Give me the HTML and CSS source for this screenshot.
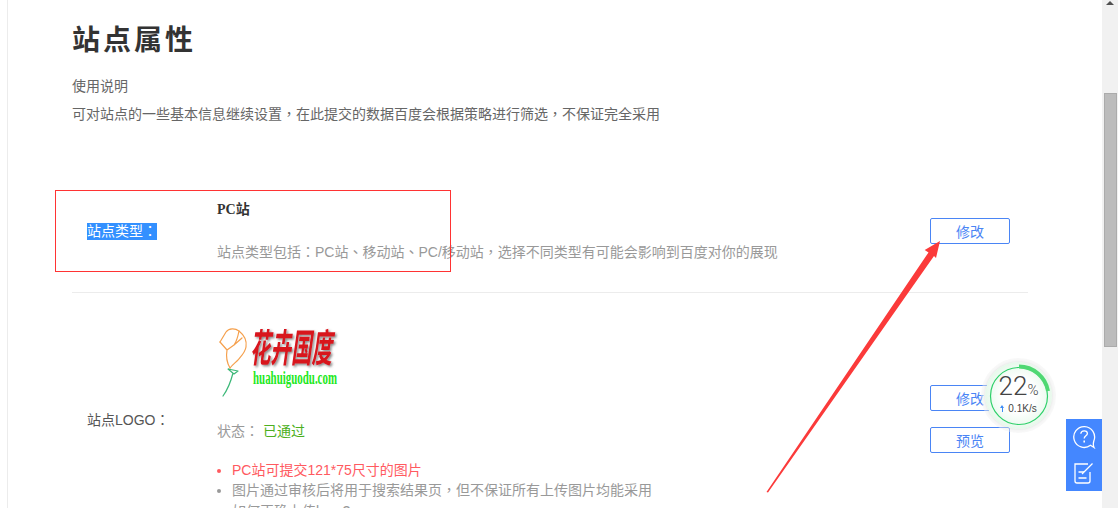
FILE: index.html
```html
<!DOCTYPE html>
<html lang="zh-CN">
<head>
  <meta charset="UTF-8"/>
  <title>站点属性</title>
  <link rel="stylesheet" href="styles.css">
</head>
<body>
  <div class="page">
    <main class="content">
      <h1>站点属性</h1>
      <p class="intro-head">使用说明</p>
      <p class="intro">可对站点的一些基本信息继续设置<span class="p" lang="zh-TW">，</span>在此提交的数据百度会根据策略进行筛选<span class="p" lang="zh-TW">，</span>不保证完全采用</p>

      <section class="row row-type">
        <div class="label"><span class="selected">站点类型<span class="p" lang="zh-TW">：</span></span></div>
        <div class="value">
          <strong class="site-type">PC站</strong>
          <p class="hint">站点类型包括<span class="p" lang="zh-TW">：</span>PC站<span class="p" lang="zh-TW">、</span>移动站<span class="p" lang="zh-TW">、</span>PC/移动站<span class="p" lang="zh-TW">，</span>选择不同类型有可能会影响到百度对你的展现</p>
        </div>
        <div class="actions"><button class="btn">修改</button></div>
      </section>

      <section class="row row-logo">
        <div class="label">站点LOGO<span class="p" lang="zh-TW">：</span></div>
        <div class="value">
          <svg class="logo" width="140" height="76" viewBox="0 0 140 76">
            <defs>
              <filter id="logo-shadow" x="-10%" y="-10%" width="130%" height="130%">
                <feDropShadow dx="1.5" dy="1.5" stdDeviation="1" flood-color="#555" flood-opacity=".7"/>
              </filter>
            </defs>
            <g fill="none" stroke-linecap="round" stroke-linejoin="round" stroke-width="1.2">
              <path d="M3 19 L9 9 C12 5 18 5 22 8 C27 12 30 18 29 24 C28 30 24 33 21 37 C18 40 15 42 13 45" stroke="#f5a04d"/>
              <path d="M3 19 L10 27 C9 33 10 40 13 45 M10 27 L17 22 C20 18 21 13 22 8 M17 22 L25 15" stroke="#f5a04d"/>
              <path d="M11 46 L17 51 L21 48 Z M16 50 C14 58 11 66 6 73" stroke="#3cb878"/>
            </g>
            <g filter="url(#logo-shadow)">
              <text class="logo-cn" transform="translate(33 39) skewX(-8) scale(1 1.9)">花卉国度</text>
            </g>
            <text class="logo-en" transform="translate(36 61) scale(1 1.4)" textLength="84" lengthAdjust="spacingAndGlyphs">huahuiguodu.com</text>
          </svg>
          <p class="status">状态<span class="p" lang="zh-TW">：</span> <span class="passed">已通过</span></p>
          <ul class="rules">
            <li class="warn">PC站可提交121*75尺寸的图片</li>
            <li>图片通过审核后将用于搜索结果页<span class="p" lang="zh-TW">，</span>但不保证所有上传图片均能采用</li>
            <li class="plain">如何正确上传logo?</li>
          </ul>
        </div>
        <div class="actions">
          <button class="btn">修改</button>
          <button class="btn">预览</button>
        </div>
      </section>
    </main>

    <div class="scrollbar">
      <span class="scroll-up"></span>
      <span class="scroll-thumb"></span>
    </div>
  </div>

  <!-- annotation drawn over the screenshot -->
  <div class="mark-box"></div>
  <svg class="mark-arrow" width="1118" height="508" viewBox="0 0 1118 508">
    <polygon points="766.5,492 928.5,252.4 924.7,250 940,241 936,258 934,256 768,492.5" fill="#fb3a3a"/>
  </svg>

  <!-- speed ball -->
  <div class="speed-ball">
    <svg class="speed-ring" width="76" height="76" viewBox="0 0 76 76">
      <circle cx="38" cy="38" r="28.5" fill="none" stroke="#2fd06a" stroke-width="1.2"/>
      <path d="M38 8.5 A29.5 29.5 0 0 1 67 33" fill="none" stroke="#4fd873" stroke-width="4"/>
    </svg>
    <div class="speed-pct">22<small>%</small></div>
    <div class="speed-rate"><i class="up-arrow"></i>0.1K/s</div>
  </div>

  <aside class="side-tools">
    <svg width="24" height="24" viewBox="0 0 24 24" fill="none" stroke="#fff" stroke-width="1.3">
      <path d="M22 22.5 L18.5 20.3 A10.4 10.4 0 1 1 21.8 16 C21.2 18.4 21 20.5 22 22.5 Z"/>
      <path d="M8.8 8.8 C9 6.8 10.4 5.8 12.2 5.8 C14 5.8 15.4 7 15.4 8.6 C15.4 10.8 12.2 11 12.2 13.6" />
      <path d="M12.2 15.6 V17.4" stroke-width="1.6"/>
    </svg>
    <svg width="24" height="24" viewBox="0 0 24 24" fill="none" stroke="#fff" stroke-width="1.3">
      <path d="M16 3 H3 V20 A2 2 0 0 0 5 22 H16 A2 2 0 0 0 18 20 V11"/>
      <path d="M10 13 L20.5 2.5"/>
      <path d="M6.5 11 H12 M6.5 17 H14.5"/>
    </svg>
  </aside>
</body>
</html>
```

FILE: styles.css
```css
* { margin:0; padding:0; box-sizing:border-box; }
html, body { height:100%; overflow:hidden; }
body {
  font-family:"Liberation Sans","Noto Sans CJK SC",sans-serif;
  font-size:14px;
  color:#666;
  background:#fff;
}
.page { display:flex; height:508px; overflow:hidden; }

/* centred full-width punctuation */
.p { font-family:"Noto Sans CJK TC",sans-serif; line-height:0; }

/* Main column */
.content {
  flex:1;
  margin-left:7px;
  padding:22px 74px 0 64px;
  border-left:1px solid #ececec;
}
h1 {
  font-size:28px;
  line-height:38px;
  letter-spacing:3px;
  color:#333;
  font-weight:700;
}
.intro-head { margin-top:16px; line-height:20px; }
.intro { margin-top:8px; line-height:20px; }

.row {
  display:grid;
  grid-template-columns:130px 1fr 98px;
  align-items:center;
  padding-left:15px;
}
.row-type { margin-top:54px; padding-top:22px; padding-bottom:30px; border-bottom:1px solid #ececec; }
.row-logo { padding-top:30px; }
.label { color:#555; }
.selected { display:inline-block; background:#3390ff; color:#fff; line-height:17px; }
.site-type { display:block; font-family:"Liberation Serif","Noto Sans CJK SC",serif; color:#333; line-height:20px; }
.hint { margin-top:22px; color:#999; line-height:20px; white-space:nowrap; }
.actions { display:flex; flex-direction:column; gap:16px; }
.btn {
  width:80px;
  height:26px;
  background:#fff;
  border:1px solid #4a85f5;
  border-radius:2px;
  color:#4a85f5;
  font:14px "Liberation Sans","Noto Sans CJK SC",sans-serif;
}
.row-logo .value { align-self:start; }
.logo { display:block; }
.logo-cn { font:700 20.5px "Noto Sans CJK SC",sans-serif; fill:#d8121f; }
.logo-en { font:700 13px "Liberation Serif",serif; fill:#22e822; }
.status { margin-top:22px; color:#999; line-height:20px; }
.passed { color:#4caf20; }
.rules { margin-top:19px; margin-bottom:-7px; padding-left:15px; color:#999; line-height:20px; white-space:nowrap; }
.rules .warn { color:#ff5a5f; }
.rules .warn::marker { color:#ff5a5f; }
.rules .plain { margin-top:1px; }

/* Fake browser scrollbar */
.scrollbar { position:relative; flex:0 0 16px; background:#f1f1f1; }
.scroll-up {
  position:absolute; left:4px; top:1px;
  border:4px solid transparent; border-top:0; border-bottom:4px solid #505050;
}
.scroll-thumb {
  position:absolute; left:2px; top:93px;
  width:13px; height:254px;
  background:#bcbcbc; border:1px solid #ababab;
}

/* Annotation layer */
.mark-box {
  position:absolute; left:55px; top:190px;
  width:396px; height:82px;
  border:1px solid #f33;
}
.mark-arrow { position:absolute; left:0; top:0; pointer-events:none; }

/* Speed ball */
.speed-ball {
  position:absolute; left:985px; top:362px;
  width:67px; height:67px;
  border-radius:50%;
  background:radial-gradient(circle, #fff 35%, #ddf6e3 85%, #fff 86%);
  box-shadow:0 0 0 4px rgba(240,240,240,.45), 0 0 3px rgba(0,0,0,.2);
  text-align:center;
  color:#444;
}
.speed-ring { position:absolute; left:-4.5px; top:-4.5px; }
.speed-pct { position:absolute; left:0; right:0; top:10px; font:300 26px/28px Roboto,sans-serif; }
.speed-pct small { font-size:15px; }
.speed-rate { position:absolute; left:0; right:0; top:40px; font-size:10px; line-height:14px; color:#444; }
.up-arrow {
  display:inline-block; width:5px; height:7px; margin-right:3px;
  background:linear-gradient(#3d8af5,#3d8af5) center bottom/1px 4px no-repeat;
  position:relative;
}
.up-arrow::before {
  content:""; position:absolute; left:0; top:0;
  border:2.5px solid transparent; border-top:0; border-bottom:3px solid #3d8af5;
}

/* Right side tool strip */
.side-tools {
  position:absolute; left:1066px; top:419px;
  width:36px; height:72px;
  background:#4487ff;
  display:flex; flex-direction:column; align-items:center; justify-content:center; gap:12px;
}
```
